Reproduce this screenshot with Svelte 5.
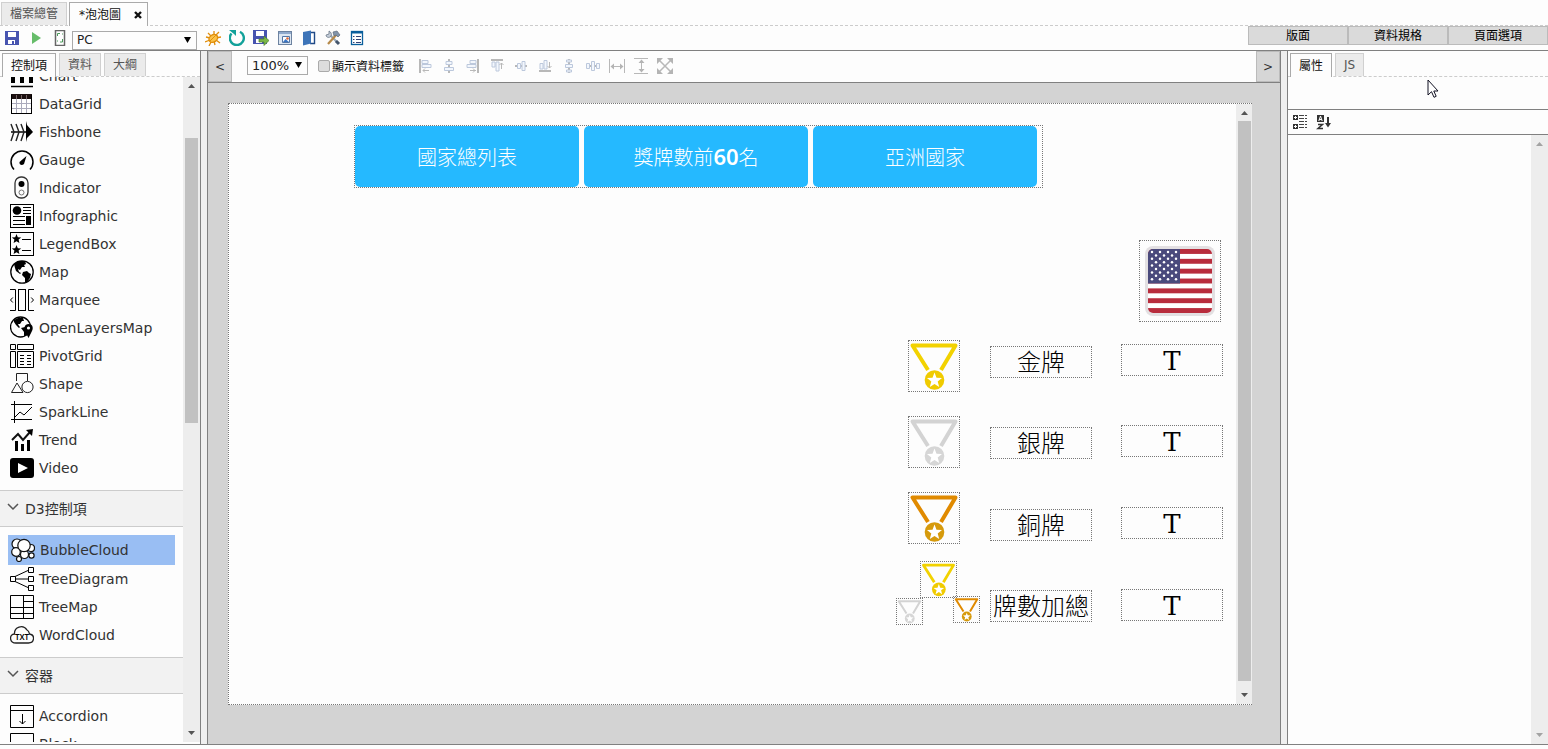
<script>
  const S = 'fill="none" stroke="#000"';

  const glyphs = {
    chart: '<path d="M1 22.500H23" stroke="#000" stroke-width="1.500"/><path d="M1 9h4v10H1zM10 4h4v15h-4zM19 7h4v12h-4z"/>',
    datagrid: '<rect x="1.500" y="3" width="20" height="18.500" fill="#fff" stroke="#000"/><path d="M6.500 3v18M11.500 3v18M16.500 3v18M2 11.500h20M2 16.500h20" stroke="#aab" fill="none"/><path d="M1 2h21v5H1z" fill="#1c1010"/><path d="M6.500 3v4M11.500 3v4M16.500 3v4" stroke="#766" fill="none"/><path d="M1.500 3v18.500h20V3" fill="none" stroke="#000"/>',
    fishbone: '<path d="M1 12h18" stroke="#000" stroke-width="1.500"/><path d="M1 4l3 8-3 9M6 4l3 8-3 9M11 4l3 8-3 9" fill="none" stroke="#222" stroke-width="1.400"/><path d="M16 1l1 4 6 7-6 6-1 4z"/>',
    gauge: `<path d="M4 21.500A11 11 0 1 1 20 21.500" ${S} stroke-width="1.500"/><path d="M16.500 8l-2.500 8c-2 2-5 1-4.500-2z"/>`,
    indicator: '<rect x="5" y="1" width="13" height="21" rx="6" fill="none" stroke="#333" stroke-width="1.300"/><circle cx="11.500" cy="8" r="3"/><circle cx="11.500" cy="16.500" r="2.500" fill="none" stroke="#777"/>',
    infographic: `<rect x=".5" y=".5" width="23" height="23" ${S}/><circle cx="7" cy="6.500" r="4.300"/><path d="M13 3.500h8M13 6.500h8M13 9.500h8M3 12.500h12M3 16.500h12M3 20.500h12" stroke="#000"/><path d="M16 12h5v9h-5z"/>`,
    legend: `<rect x=".5" y=".5" width="23" height="23" ${S}/><path d="M6.500 2l1.300 3.200 3.400.2-2.600 2.200.8 3.400-2.900-1.800L3.600 11l.8-3.400-2.600-2.200 3.400-.2z"/><path transform="translate(0 11)" d="M6.500 2l1.300 3.200 3.400.2-2.600 2.200.8 3.400-2.900-1.800L3.600 11l.8-3.400-2.600-2.200 3.400-.2z"/><path d="M12 7.500h9M12 18.500h9" stroke="#000"/>`,
    map: `<circle cx="12" cy="12" r="11.200" ${S} stroke-width="1.300"/><path d="M4 4l4-3 7 0 1 3-2 1 1 2-3 0-2 3-2-1 1 3 2 1-1 1-4-3-1-3zM13 12l4-1 2 2 2 1-1 4-3 4-2 0 0-4-3-3z"/>`,
    marquee: `<rect x="8.500" y="1.500" width="7" height="21" ${S}/><path d="M0 1.500h5.500v21H0M24 1.500h-5.500v21H24M2.800 9.500L.5 12l2.300 2.500M21.200 9.500l2.300 2.500-2.300 2.500" ${S}/>`,
    olmap: `<circle cx="10.500" cy="11" r="10" ${S} stroke-width="1.300"/><path d="M4 4l4-2 5 0 1 3-2 0-2 3-2 0 1 2 1 1-1 1-3-3-2-3zM11 12l4-1 4 3-1 5-4 1 0-4z"/><path d="M18.500 8c5 0 5 5 3 8l-3 6-3-6c-2-4-1-8 3-8z"/><circle cx="18.500" cy="12" r="1.600" fill="#fff"/>`,
    pivot: `<path d="M.5.500h5v5h-5zM7.500.500h16v5h-16zM.5 7.500h5v16h-5zM7.500 7.500h16v16h-16z" ${S}/><path d="M10 11.500h4M10 14.500h4M10 17.500h4M10 20.500h4M17 11.500h4M17 14.500h4M17 17.500h4M17 20.500h4" stroke="#000"/>`,
    shape: '<path d="M6.500 9V1.500h11V9M1.500 20.500L7 11l6 9.500z" fill="none" stroke="#222"/><circle cx="17.500" cy="15" r="5.600" fill="#fdfdfd" stroke="#222"/>',
    spark: `<path d="M4.500 1v22M1 4.500h21M1 19.500h21" ${S}/><path d="M5 17l5-5 4 3 8-8" ${S}/>`,
    trend: '<path d="M5 13h3v10H5zM11 16h3v7h-3zM17 12h3v11h-3z"/><path d="M2 12l6-6 5 6 7-8" fill="none" stroke="#111" stroke-width="2"/><path d="M16 2l7-1-1 7z"/>',
    video: '<rect x="0" y="2" width="24" height="20" rx="3"/><path d="M8 7l10 5-10 5z" fill="#fff"/>',
    bubble: '<g fill="#fff" stroke="#111" stroke-width="1.200"><circle cx="6" cy="6" r="5"/><circle cx="20" cy="10" r="3.500"/><circle cx="5" cy="14" r="4.300"/><circle cx="13.500" cy="16.500" r="4"/><circle cx="20.500" cy="17.500" r="2.600"/><circle cx="8" cy="21" r="2.500"/><circle cx="13" cy="7.500" r="6.200"/></g>',
    treediagram: '<path d="M4 10L19 3M5 12h14M4 14l15 7" stroke="#000"/><path d="M.5 9.500h5v5h-5zM18.500.500h5v5h-5zM18.500 9.500h5v5h-5zM18.500 18.500h5v5h-5z" fill="#fff" stroke="#000"/>',
    treemap: `<path d="M.5.500h23v23H.5zM13.500 1v22M1 12.500h22M1 18.500h22M14 6.500h9" ${S}/>`,
    wordcloud: '<path d="M6 20C-1 20-1 11 4.500 11 4 4 13 1 17 7c2 1 2 2 2.500 4 6 1 5 9-1 9z" fill="none" stroke="#222" stroke-width="1.300"/><text x="12" y="17" text-anchor="middle" font-family="Noto Sans" font-weight="600" font-size="8">TXT</text>',
    accordion: `<path d="M.5 1.500h23v22H.5zM1 6.500h22M12.500 10v10M9.500 17l3 3 3-3" ${S}/>`,
    block: `<path d="M.5 1.500h23v22H.5z" ${S}/>`
  };

  const basic = [
    ['Chart', 'chart'], ['DataGrid', 'datagrid'], ['Fishbone', 'fishbone'], ['Gauge', 'gauge'],
    ['Indicator', 'indicator'], ['Infographic', 'infographic'], ['LegendBox', 'legend'], ['Map', 'map'],
    ['Marquee', 'marquee'], ['OpenLayersMap', 'olmap'], ['PivotGrid', 'pivot'], ['Shape', 'shape'],
    ['SparkLine', 'spark'], ['Trend', 'trend'], ['Video', 'video']
  ];
  const d3 = [['BubbleCloud', 'bubble'], ['TreeDiagram', 'treediagram'], ['TreeMap', 'treemap'], ['WordCloud', 'wordcloud']];
  const containers = [['Accordion', 'accordion'], ['Block', 'block']];
  let selected = $state('BubbleCloud');

  const fileTools = [
    ['Save', '<path d="M1 1h14v14H1z" fill="#4754b0"/><path d="M4 2h8v5H4z" fill="#fff"/><path d="M4 10h7v4H4z" fill="#fff"/><path d="M8 11h2v3H8z" fill="#4754b0"/>'],
    ['Run', '<path d="M4 2l9 6-9 6z" fill="#67bd6a"/>'],
    ['Fit', '<rect x="3.500" y=".5" width="9" height="15" fill="#fff" stroke="#666" stroke-width="1.500"/><path d="M5.500 6V3.500H8M10.500 9v3H8M6 11h-1M10 4h1" fill="none" stroke="#4a9a5a"/>']
  ];
  const pageTools = [
    ['Debug', '<g stroke="#e08e0b" stroke-width="1.300"><path d="M3 3l3 3M1 7l4 1M0 12l5-2M4 16l2-4M9 1v4M14 2l-4 4M16 7l-5 1M15 13l-4-3M10 15l-1-4"/></g><ellipse cx="8" cy="8.500" rx="4.600" ry="3.600" transform="rotate(-35 8 8)" fill="#fbc34a" stroke="#e08e0b" stroke-width="1.400"/><path d="M5 11l6-6" stroke="#e08e0b"/>'],
    ['Reload', '<path d="M2.500 3.500A7 7 0 1 0 11 1.800" fill="none" stroke="#12a19a" stroke-width="2.400"/><path d="M0 0h7v6L5 4z" fill="#12a19a"/>'],
    ['Export', '<path d="M0 0h14v14H0z" fill="#4754b0"/><path d="M3 1h8v5H3zM3 9h6v4H3z" fill="#fff"/><path d="M6 9h5V6l5 4.500-5 5V12H6z" fill="#7ab648" stroke="#4b7f28" stroke-width=".7"/>'],
    ['Preview', '<rect x="1.500" y="1.500" width="13" height="13" fill="#dce6f2" stroke="#6d83a0"/><path d="M2 2h12v2H2z" fill="#8fa9cc"/><path d="M5.500 6.500h7v6h-7z" fill="#fff" stroke="#5577a5"/><path d="M6 12l2.500-3 3.500 3z" fill="#3b76c4"/><circle cx="10.500" cy="8.500" r="1.300" fill="#e06a3b"/>'],
    ['Layout', '<path d="M8 2.500h5.500v11H9" fill="#fff" stroke="#204a87" stroke-width="1.400"/><path d="M2 2l8-1.500v13L2 15.500z" fill="#3d74b8"/>'],
    ['Settings', '<path d="M4 4l9 9" stroke="#9aa9ba" stroke-width="2.200"/><path d="M1 5c0 3 4 3 5 1s0-4-2-5l0 3z" fill="#c4cdd8" stroke="#5d6b7c" stroke-width=".7"/><path d="M12 4L3 14" stroke="#b68a4a" stroke-width="2.200"/><path d="M8 2l4-1 3 4-2 2-2-2-2 1z" fill="#8294aa" stroke="#5d6b7c" stroke-width=".7"/><path d="M11 11l3 3" stroke="#45566c" stroke-width="3"/>'],
    ['Properties', '<rect x="2.500" y="1.500" width="11" height="13" fill="#fff" stroke="#0a5f9c" stroke-width="1.300"/><path d="M2 2.500h12" stroke="#0a5f9c" stroke-width="2"/><path d="M4 6.500h1.500M4 9.500h1.500M4 12.500h1.500M7 6.500h5M7 9.500h5M7 12.500h5" stroke="#347" />']
  ];

  const a = 'fill="#f3f7fd" stroke="#bcc8dc"';
  const g = 'fill="none" stroke="#b8b8b8"';
  const alignTools = [
    ['Align left', `<path d="M3 1v14" ${g} stroke-width="2"/><path d="M5 2.500h6v3H5zM5 6.500h9v3H5z" ${a}/><path d="M6 12.500h6M8 10.500l-2 2 2 2" ${g}/>`],
    ['Align center', `<path d="M8 1v14" ${g} stroke-width="2"/><path d="M5 3.500h6v3H5zM3.500 9.500h9v3h-9z" ${a}/>`],
    ['Align right', `<path d="M13 1v14" ${g} stroke-width="2"/><path d="M5 2.500h6v3H5zM2 6.500h9v3H2z" ${a}/><path d="M5 12.500h6M8 10.500l2 2-2 2" ${g}/>`],
    ['Align top', `<path d="M2 2h12" ${g} stroke-width="2"/><path d="M3 4h3v5H3zM7 4h3v9H7z" ${a}/><path d="M12.500 5v6M10.500 7l2-2 2 2" ${g}/>`],
    ['Align middle', `<path d="M2 8h12" ${g} stroke-width="2"/><path d="M4.500 5.500h3v5h-3zM9 3.500h3v9H9z" ${a}/>`],
    ['Align bottom', `<path d="M2 13h12" ${g} stroke-width="2"/><path d="M3 5.500h3V11H3zM7 2.500h3V11H7z" ${a}/><path d="M12.500 4v6M10.500 8l2 2 2-2" ${g}/>`],
    ['Distribute vertically', `<path d="M8 1v14" ${g} stroke-width="2"/><path d="M5.500 2h5v2h-5zM4.500 6.500h7v3h-7zM5.500 12h5v2h-5z" ${a}/>`],
    ['Distribute horizontally', `<path d="M1 8h14" ${g} stroke-width="2"/><path d="M1.500 5.500h3v5h-3zM6.500 3.500h3v9h-3zM11.500 5.500h3v5h-3z" ${a}/>`],
    ['Same width', `<path d="M.5 1v14M15.500 1v14M2 8.500h12" ${g}/><path d="M5 5.500l-3.500 3 3.500 3zM11 5.500l3.500 3-3.500 3z" fill="#b4b4b4"/>`],
    ['Same height', `<path d="M1 .5h14M1 15.500h14M8.500 2v12" ${g}/><path d="M5.500 5l3-3.500 3 3.500zM5.500 11l3 3.500 3-3.500z" fill="#b4b4b4"/>`],
    ['Same size', `<path d="M2 2l12 12M14 2L2 14" ${g} stroke-width="1.500"/><path d="M0 0h6L0 6zM16 0v6l-6-6zM0 16v-6l6 6zM16 16h-6l6-6z" fill="#b4b4b4"/>`]
  ];

  const medals = [
    { x: 679, y: 236, size: 52, band: '#f2d200', disc: '#f0cb00' },
    { x: 679, y: 312, size: 52, band: '#d3d3d3', disc: '#d6d6d6' },
    { x: 679, y: 388, size: 52, band: '#e08a00', disc: '#d69a0c' },
    { x: 691, y: 457, size: 37, band: '#f2d200', disc: '#f0cb00' },
    { x: 667, y: 494, size: 27, band: '#d3d3d3', disc: '#d6d6d6' },
    { x: 724, y: 492, size: 27, band: '#e08a00', disc: '#d69a0c' }
  ];
  const fields = [
    { text: '金牌', y: 242, valueY: 240 },
    { text: '銀牌', y: 323, valueY: 321 },
    { text: '銅牌', y: 405, valueY: 403 },
    { text: '牌數加總', y: 486, valueY: 485 }
  ];
  const stripes = [0, 2, 4, 6, 8, 10, 12];
  const stars = Array.from({ length: 9 }, (_, r) =>
    Array.from({ length: r % 2 ? 3 : 4 }, (_, c) => [7 + c * 8 + (r % 2 ? 4 : 0), 6 + r * 3.4])
  ).flat();
</script>

{#snippet glyph(markup, size, box)}
  <svg width={size} height={size} viewBox="0 0 {box} {box}" aria-hidden="true">{@html markup}</svg>
{/snippet}

{#snippet bar(before, thumb, after, faded)}
  <div class="scroll" class:faded>
    <svg width="7" height="4" viewBox="0 0 7 4" aria-hidden="true"><path d="M3.500 0L7 4H0z" /></svg>
    <div class="track">
      <i style:flex-grow={before}></i>
      <i class="thumb" style:flex-grow={thumb}></i>
      <i style:flex-grow={after}></i>
    </div>
    <svg width="7" height="4" viewBox="0 0 7 4" aria-hidden="true"><path d="M3.500 4L7 0H0z" /></svg>
  </div>
{/snippet}

{#snippet items(list)}
  <ul>
    {#each list as [name, icon]}
      <li>
        <button class="item" class:selected={selected === name} onclick={() => (selected = name)}>
          {@render glyph(glyphs[icon], 24, 24)}<span>{name}</span>
        </button>
      </li>
    {/each}
  </ul>
{/snippet}

{#snippet section(title)}
  <h2>
    <svg width="12" height="8" viewBox="0 0 12 8" aria-hidden="true"><path d="M1 1l5 5 5-5" fill="none" stroke="#555" stroke-width="1.500" /></svg>
    {title}
  </h2>
{/snippet}

<div class="app">
  <nav class="files">
    <button class="tab">檔案總管</button>
    <button class="tab active doc">*泡泡圖
      <svg width="8" height="8" viewBox="0 0 8 8" aria-hidden="true"><path d="M1 1l6 6M7 1L1 7" stroke="#111" stroke-width="2.400" /></svg>
    </button>
  </nav>

  <header class="toolbar">
    {#each fileTools as [name, icon]}
      <button class="tool" aria-label={name}>{@render glyph(icon, 16, 16)}</button>
    {/each}
    <div class="drop device">
      <select aria-label="Device"><option>PC</option></select>
      <svg width="7" height="6" viewBox="0 0 7 6" aria-hidden="true"><path d="M0 0h7L3.500 6z" /></svg>
    </div>
    {#each pageTools as [name, icon]}
      <button class="tool" aria-label={name}>{@render glyph(icon, 16, 16)}</button>
    {/each}
    <div class="modes">
      <button>版面</button><button>資料規格</button><button>頁面選項</button>
    </div>
  </header>

  <main>
    <aside class="left">
      <div class="tabs">
        <button class="tab active">控制項</button>
        <button class="tab">資料</button>
        <button class="tab">大綱</button>
      </div>
      <div class="palette">
        <div class="groups">
          <div class="scrolled">
            {@render items(basic)}
            {@render section('D3控制項')}
            {@render items(d3)}
            {@render section('容器')}
            {@render items(containers)}
          </div>
        </div>
        {@render bar(44, 286, 302, false)}
      </div>
    </aside>

    <section class="center">
      <div class="design-bar">
        <button class="edge">&lt;</button>
        <div class="drop zoom">
          <select aria-label="Zoom"><option>100%</option></select>
          <svg width="7" height="6" viewBox="0 0 7 6" aria-hidden="true"><path d="M0 0h7L3.500 6z" /></svg>
        </div>
        <label><input type="checkbox" />顯示資料標籤</label>
        <div class="aligns">
          {#each alignTools as [name, icon]}
            <button class="tool" aria-label={name}>{@render glyph(icon, 16, 16)}</button>
          {/each}
        </div>
        <button class="edge last">&gt;</button>
      </div>

      <div class="desk">
        <div class="page">
          <div class="canvas">
            <div class="node menu">
              <button>國家總列表</button><button>獎牌數前<b>60</b>名</button><button>亞洲國家</button>
            </div>

            <div class="node flag">
              <svg viewBox="0 0 70 70" width="70" height="70" aria-hidden="true">
                <defs><clipPath id="flagclip"><rect x="3" y="3" width="64" height="64" rx="5" /></clipPath></defs>
                <rect width="70" height="70" rx="8" fill="#e3e0e2" />
                <g clip-path="url(#flagclip)">
                  <rect x="3" y="3" width="64" height="64" fill="#fff" />
                  {#each stripes as n}<rect x="3" y={3 + n * 4.923} width="64" height="4.923" fill="#b82c3c" />{/each}
                  <rect x="3" y="3" width="32" height="34.500" fill="#4a4a7c" />
                  {#each stars as [x, y]}<circle cx={x} cy={y} r="1.250" fill="#fff" />{/each}
                </g>
              </svg>
            </div>

            {#each medals as m}
              <div class="node" style:left="{m.x}px" style:top="{m.y}px" style:width="{m.size}px" style:height="{m.size}px">
                <svg viewBox="0 0 50 50" width="100%" height="100%" aria-hidden="true">
                  <path d="M19 29L3.500 4.500h43L32 29" fill="none" stroke={m.band} stroke-width="4" stroke-linejoin="round" />
                  <circle cx="25.500" cy="39" r="9.800" fill={m.disc} />
                  <path d="M25.500 31.500l2 5.200 5.500.3-4.300 3.500 1.500 5.400-4.700-3-4.700 3 1.500-5.400-4.300-3.500 5.500-.3z" fill="#fff" />
                </svg>
              </div>
            {/each}

            {#each fields as f}
              <div class="node field" style:top="{f.y}px">{f.text}</div>
              <div class="node field value" style:top="{f.valueY}px">T</div>
            {/each}
          </div>
          {@render bar(0, 559, 6, false)}
        </div>
      </div>
    </section>

    <aside class="right">
      <div class="tabs">
        <button class="tab active">屬性</button>
        <button class="tab">JS</button>
      </div>
      <div class="summary">
        <svg class="pointer" width="12" height="19" viewBox="0 0 12 19" aria-hidden="true"><path d="M1 1v15l3.500-3.300L7 18.300l2.200-1L6.800 12H11z" fill="#fff" stroke="#112" /></svg>
      </div>
      <div class="sorts">
        <button class="tool" aria-label="Categorized">
          <svg width="16" height="16" viewBox="0 0 16 16" aria-hidden="true"><path d="M1 1h5v5H1zM1 10h5v5H1z" fill="#333" /><path d="M2 3.500h3M3.500 2v3M2 12.500h3M3.500 11v3" stroke="#fff" /><path d="M7 1.500h5M13 1.500h2M7 4.500h5M13 4.500h2M7 7.500h5M13 7.500h2M7 10.500h5M13 10.500h2M7 13.500h5M13 13.500h2" stroke="#444" /></svg>
        </button>
        <button class="tool" aria-label="Alphabetical">
          <svg width="16" height="16" viewBox="0 0 16 16" aria-hidden="true"><path d="M1 1h7v7H1z" fill="#333" /><path d="M2.800 7l1.700-5 1.700 5M3.200 5.500h2.600" fill="none" stroke="#fff" /><path d="M2 10.500h4.500L2 14.500h5" fill="none" stroke="#333" stroke-width="1.500" /><path d="M12 3v9" stroke="#333" stroke-width="2" /><path d="M9 9h6l-3 4.500z" fill="#333" /></svg>
        </button>
      </div>
      <div class="props">
        {@render bar(1, 0, 0, true)}
      </div>
    </aside>
  </main>
</div>

<style>
  :global(body) { margin: 0; background: #fdfdfd; }
  .app {
    display: flex; flex-direction: column; height: 100vh; box-sizing: border-box; padding-bottom: 4px;
    overflow: hidden; color: #222; font: 12px "DejaVu Sans", "Noto Sans CJK TC", sans-serif;
  }
  .app :global(*) { box-sizing: border-box; }
  button, select { font: inherit; color: inherit; }
  button { padding: 0; border: 0; background: none; }
  svg { display: block; flex: none; }
  ul { list-style: none; margin: 0; padding: 0; }

  .files { display: flex; align-items: flex-end; gap: 2px; height: 26px; padding-left: 1px; border-bottom: 1px dashed #ccc; flex: none; }
  .tab { height: 23px; padding: 0 8px; background: #ebebeb; border: 1px solid #d0d0d0; border-bottom: 0; color: #555; line-height: 20px; white-space: nowrap; }
  .tab.active { background: #fdfdfd; border-color: #aaa; color: #111; margin-bottom: -1px; height: 24px; }
  .tab.doc { display: flex; align-items: center; gap: 13px; padding: 0 5px 0 9px; }

  .toolbar { display: flex; align-items: center; height: 25px; border-bottom: 1px solid #808080; flex: none; }
  .tool { width: 24px; height: 24px; display: grid; place-items: center; flex: none; }
  .drop { position: relative; flex: none; }
  .drop select { appearance: none; display: block; width: 100%; height: 19px; padding: 0 4px; border: 1px solid #aaa; border-radius: 0; background: #fdfdfd; line-height: 17px; }
  .drop svg { position: absolute; right: 6px; top: 6px; pointer-events: none; }
  .device { width: 125px; margin: 4px 4px 0 0; }
  .modes { display: flex; margin-left: auto; align-self: flex-start; width: 300px; }
  .modes button { flex: 1; height: 19px; border: 1px solid #bbb; background: #dadada; color: #000; line-height: 16px; }

  main { display: flex; flex: 1; min-height: 0; border-bottom: 1px solid #808080; background: #efefef; }
  .left, .right { display: flex; flex-direction: column; background: #fdfdfd; flex: none; }
  .left { width: 201px; border-right: 1px solid #808080; }
  .tabs { display: flex; align-items: flex-end; gap: 3px; height: 26px; padding-left: 2px; border-bottom: 1px dashed #ccc; flex: none; }
  .palette { display: flex; flex: 1; min-height: 0; padding-bottom: 2px; }
  .groups { flex: 1; overflow: hidden; }
  .scrolled { margin-top: -15px; }
  .item { display: flex; align-items: center; gap: 5px; width: 100%; height: 28px; padding-left: 10px; text-align: left; font-size: 14px; line-height: 20px; color: #333; }
  .item.selected { width: calc(100% - 16px); height: 30px; margin-left: 8px; padding-left: 3px; background: #99bef3; }
  h2 { display: flex; align-items: center; gap: 6px; margin: 8px 0; height: 37px; padding-left: 7px; border: solid #ccc; border-width: 1px 0; background: #f2f2f2; color: #333; font-size: 14px; font-weight: 400; line-height: 20px; }
  h2 svg { margin-bottom: 4px; }

  .scroll { display: flex; flex-direction: column; align-items: center; width: 17px; padding: 7px 0; gap: 6px; background: #ededed; flex: none; }
  .scroll path { fill: #555; }
  .faded path { fill: #a3a3a3; }
  .track { display: flex; flex-direction: column; flex: 1; width: 13px; }
  .track i { flex-basis: 0; }
  .thumb { background: #c1c1c1; }

  .center { display: flex; flex-direction: column; flex: 1; min-width: 0; margin: 0 6px; border: solid #808080; border-width: 0 1px; }
  .design-bar { display: flex; align-items: center; height: 32px; border-bottom: 1px solid #808080; background: #fdfdfd; flex: none; }
  .edge { width: 24px; height: 31px; border: 1px solid #bbb; background: #d6d6d6; color: #333; }
  .last { margin-left: auto; }
  .zoom { width: 61px; margin: 0 10px 2px 15px; font-size: 13px; }
  label { display: flex; align-items: center; gap: 2px; color: #111; line-height: 16px; white-space: nowrap; }
  input { appearance: none; width: 12px; height: 12px; margin: 0 0 2px; border: 1px solid #aaa; border-radius: 2px; background: #ddd; }
  .aligns { display: flex; margin: 0 0 2px 9px; }
  .desk { flex: 1; min-height: 0; padding: 20px 28px 39px 20px; background: #d3d3d3; }
  .page { display: flex; height: 100%; border: 1px dotted #777; border-right: 0; background: #fdfdfd; }
  .page .scroll { width: 16px; }
  .canvas { position: relative; flex: 1; overflow: hidden; }
  .node { position: absolute; border: 1px dotted #777; }
  .menu { left: 125px; top: 21px; width: 689px; height: 63px; display: flex; gap: 5px; }
  .menu button { width: 224px; border-radius: 5px; background: #25b9ff; color: #fff; font-size: 20px; font-weight: 300; }
  .menu b { font: 600 22px/24px "Noto Sans", sans-serif; }
  .flag { left: 910px; top: 136px; width: 82px; height: 82px; padding: 5px; }
  .field { left: 761px; width: 102px; height: 32px; color: #000; text-align: center; font-size: 24px; font-weight: 300; line-height: 32px; white-space: nowrap; }
  .field.value { left: 892px; font: 26px/32px "DejaVu Serif", serif; }

  .right { width: 261px; border-left: 1px solid #808080; }
  .summary { position: relative; height: 33px; border-bottom: 1px solid #808080; flex: none; }
  .pointer { position: absolute; left: 139px; top: 2px; }
  .sorts { display: flex; height: 25px; border-bottom: 1px solid #808080; flex: none; }
  .props { display: flex; justify-content: flex-end; flex: 1; min-height: 0; }
</style>
